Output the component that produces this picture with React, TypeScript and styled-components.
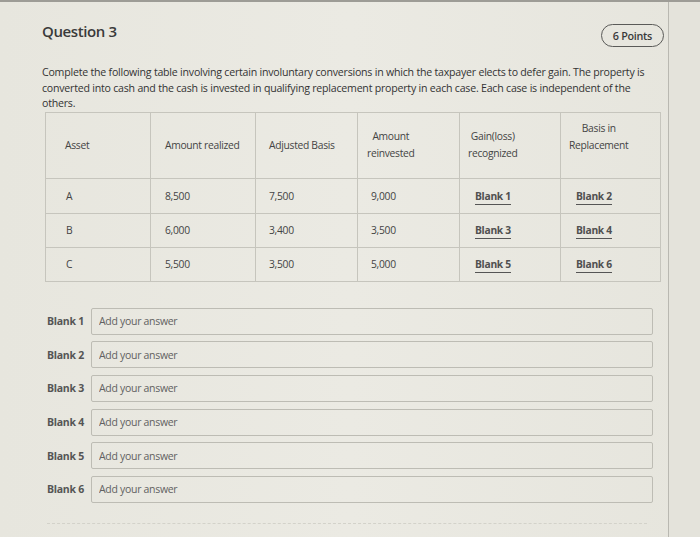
import React from "react";
import styled, { createGlobalStyle } from "styled-components";

const GlobalStyle = createGlobalStyle`
  html, body { margin: 0; padding: 0; }
  body { background: #e6e5dd; font-family: "Open Sans", "Liberation Sans", sans-serif; }
`;

const Page = styled.div`
  width: 700px;
  height: 537px;
  overflow: hidden;
  display: flex;
  background: linear-gradient(90deg, #e7e6de 0%, #ebeae3 50%, #e6e5dd 100%);
  border-top: 2px solid #9d9c96;
  box-sizing: border-box;
`;

const Card = styled.div`
  width: 669px;
  flex: none;
  border-right: 1px solid #b9b8b1;
  box-sizing: border-box;
  padding: 18px 4px 0 42px;
  display: flex;
  flex-direction: column;
`;

const Side = styled.div`
  flex: 1;
  background: #e4e3db;
`;

const HeaderRow = styled.div`
  display: flex;
  align-items: flex-start;
  justify-content: space-between;
  height: 22px;
`;

const Title = styled.h1`
  margin: 0;
  font-size: 15px;
  line-height: 22px;
  font-weight: 600;
  color: #3a3a3a;
  letter-spacing: -0.4px;
`;

const Points = styled.div`
  margin-top: 4px;
  height: 23px;
  box-sizing: border-box;
  padding: 0 11px;
  border: 1.5px solid #5a5a58;
  border-radius: 12px;
  display: flex;
  align-items: center;
  font-size: 10.8px;
  font-weight: 600;
  color: #3a3a3a;
  letter-spacing: -0.3px;
`;

const Prompt = styled.p`
  margin: 23px 0 0;
  width: 612px;
  font-size: 10.6px;
  line-height: 15.5px;
  color: #333;
  letter-spacing: -0.22px;
`;

const Table = styled.table`
  margin: 0 0 0 3px;
  width: 615px;
  border-collapse: collapse;
  table-layout: fixed;
  font-size: 10.3px;
  color: #444;
  letter-spacing: -0.3px;
`;

const Th = styled.th<{ $pl: number; $shift?: number }>`
  height: 66px;
  box-sizing: border-box;
  border: 1px solid #c6c5bd;
  padding: 0 0 ${(p) => p.$shift ?? 0}px ${(p) => p.$pl}px;
  text-align: left;
  font-weight: 400;
  line-height: 17px;
  vertical-align: middle;
`;

const HeadText = styled.span`
  display: inline-block;
  text-align: center;
`;

const Td = styled.td<{ $pl: number; $h: number }>`
  height: ${(p) => p.$h}px;
  border: 1px solid #c6c5bd;
  padding: 0 0 0 ${(p) => p.$pl}px;
  vertical-align: middle;
  box-sizing: border-box;
`;

const BlankRef = styled.span`
  font-weight: 700;
  color: #505050;
  border-bottom: 1.5px solid #555;
  padding-bottom: 1px;
`;

const Answers = styled.div`
  margin: 26px 0 0 5px;
  display: flex;
  flex-direction: column;
  gap: 6.7px;
`;

const AnswerRow = styled.div`
  display: flex;
  align-items: center;
`;

const Label = styled.label`
  width: 44px;
  flex: none;
  font-size: 10.5px;
  font-weight: 700;
  color: #555;
  letter-spacing: -0.25px;
`;

const Input = styled.input`
  width: 562px;
  height: 27px;
  box-sizing: border-box;
  border: 1px solid #bdbcb4;
  border-radius: 2px;
  background: transparent;
  padding: 0 7px;
  font-family: "Open Sans", "Liberation Sans", sans-serif;
  font-size: 10.5px;
  letter-spacing: -0.3px;
  color: #333;
  &::placeholder { color: #616161; }
`;

const Divider = styled.div`
  margin: 20px 0 0 5px;
  width: 600px;
  border-top: 1px dashed #d3d2ca;
`;

const cols = [105, 105, 102, 102, 101, 100];

const rows = [
  { asset: "A", realized: "8,500", basis: "7,500", reinvested: "9,000", g: 1, b: 2, h: 35 },
  { asset: "B", realized: "6,000", basis: "3,400", reinvested: "3,500", g: 3, b: 4, h: 34 },
  { asset: "C", realized: "5,500", basis: "3,500", reinvested: "5,000", g: 5, b: 6, h: 34 },
];

export default function App() {
  return (
    <>
      <GlobalStyle />
      <Page>
        <Card>
          <HeaderRow>
            <Title>Question 3</Title>
            <Points>6 Points</Points>
          </HeaderRow>
          <Prompt>
            Complete the following table involving certain involuntary conversions in which the taxpayer elects to defer gain. The property is converted into cash and the cash is invested in qualifying replacement property in each case. Each case is independent of the others.
          </Prompt>
          <Table>
            <colgroup>
              {cols.map((w, i) => (
                <col key={i} style={{ width: w }} />
              ))}
            </colgroup>
            <thead>
              <tr>
                <Th $pl={19}>Asset</Th>
                <Th $pl={14}>Amount realized</Th>
                <Th $pl={13}>Adjusted Basis</Th>
                <Th $pl={9}>
                  <HeadText>Amount<br />reinvested</HeadText>
                </Th>
                <Th $pl={8}>
                  <HeadText>Gain(loss)<br />recognized</HeadText>
                </Th>
                <Th $pl={8} $shift={16}>
                  <HeadText>Basis in<br />Replacement</HeadText>
                </Th>
              </tr>
            </thead>
            <tbody>
              {rows.map((r) => (
                <tr key={r.asset}>
                  <Td $pl={20} $h={r.h}>{r.asset}</Td>
                  <Td $pl={14} $h={r.h}>{r.realized}</Td>
                  <Td $pl={13} $h={r.h}>{r.basis}</Td>
                  <Td $pl={13} $h={r.h}>{r.reinvested}</Td>
                  <Td $pl={15} $h={r.h}><BlankRef>Blank {r.g}</BlankRef></Td>
                  <Td $pl={15} $h={r.h}><BlankRef>Blank {r.b}</BlankRef></Td>
                </tr>
              ))}
            </tbody>
          </Table>
          <Answers>
            {[1, 2, 3, 4, 5, 6].map((n) => (
              <AnswerRow key={n}>
                <Label htmlFor={`blank-${n}`}>Blank {n}</Label>
                <Input id={`blank-${n}`} placeholder="Add your answer" />
              </AnswerRow>
            ))}
          </Answers>
          <Divider />
        </Card>
        <Side />
      </Page>
    </>
  );
}
